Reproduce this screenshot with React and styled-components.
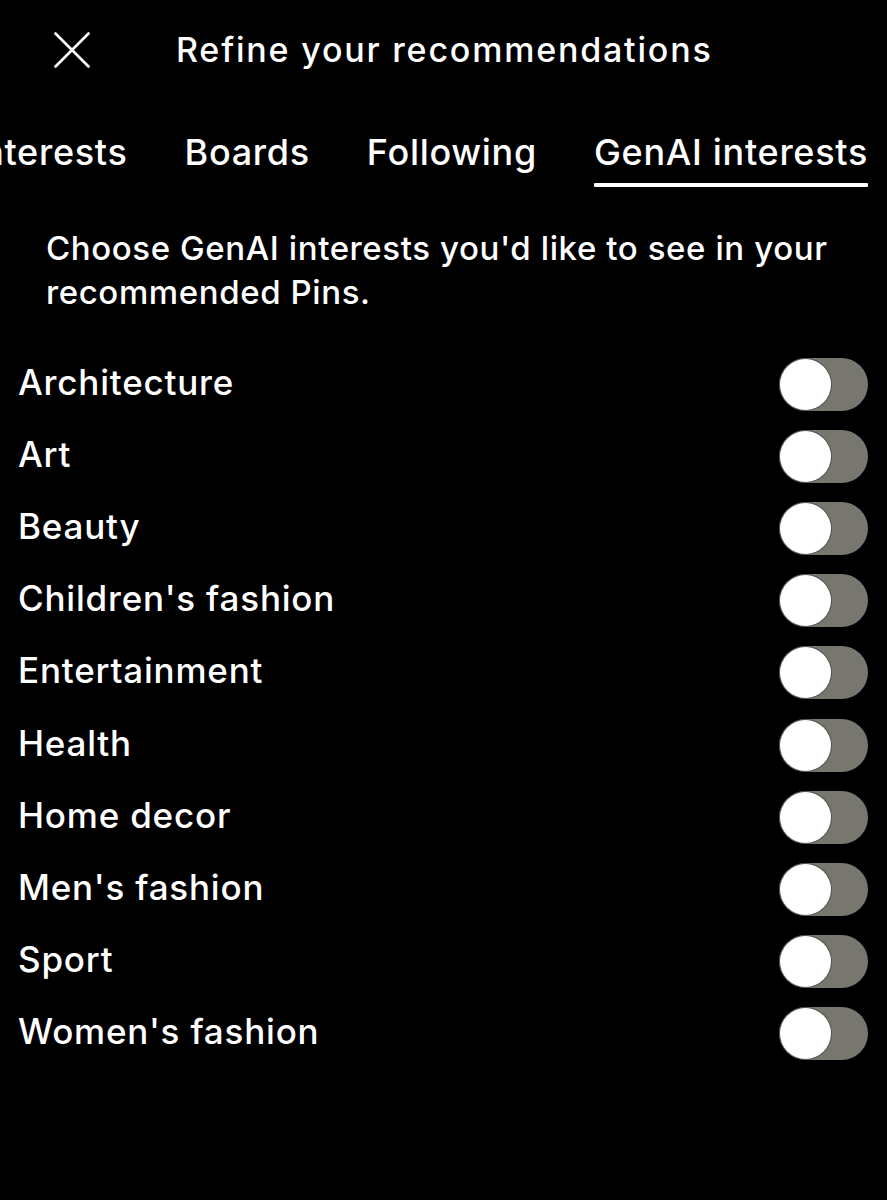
import styled, {createGlobalStyle} from "styled-components";

const GlobalStyle = createGlobalStyle`
  html, body {
    margin: 0;
    padding: 0;
    background: #000;
  }
  body {
    font-family: Inter, "Noto Sans", "Liberation Sans", sans-serif;
    font-weight: 500;
    color: #fff;
    -webkit-font-smoothing: antialiased;
  }
`

const Page = styled.div`
  width: 887px;
  min-height: 1200px;
  background: #000;
  overflow: hidden;
`

const Header = styled.div`
  height: 100px;
  display: flex;
  align-items: center;
  padding-left: 54px;
  gap: 86px;
`

const CloseButton = styled.button`
  width: 36px;
  height: 36px;
  padding: 0;
  border: none;
  background: none;
  color: #fff;
  display: flex;
  align-items: center;
  justify-content: center;
`

const Title = styled.div`
  font-size: 34px;
  line-height: 44px;
  letter-spacing: 1.8px;
`

const TabBar = styled.div`
  display: flex;
  justify-content: flex-end;
  gap: 57px;
  padding-right: 19px;
  overflow: hidden;
`

const Tab = styled.div`
  flex-shrink: 0;
  padding-top: 30px;
  display: flex;
  flex-direction: column;
  font-size: 36px;
  line-height: 44px;
  letter-spacing: 0.7px;
  white-space: nowrap;

  &:after {
    content: "";
    display: block;
    height: 4px;
    margin-top: 9px;
    border-radius: 1px;
    background: ${p => (p.$active ? "#fff" : "transparent")};
  }
`

const Description = styled.p`
  margin: 39px 0 0;
  padding: 0 40px 0 46px;
  font-size: 33px;
  line-height: 44px;
  letter-spacing: 0.6px;
`

const List = styled.div`
  margin-top: 34px;
  padding: 0 19px 0 18px;
  display: flex;
  flex-direction: column;
`

const Row = styled.div`
  height: 72.2px;
  display: flex;
  align-items: center;
  justify-content: space-between;
`

const Label = styled.span`
  font-size: 35px;
  letter-spacing: 0.8px;
  margin-top: -5px;
`

const Track = styled.div`
  width: 89px;
  height: 53px;
  border-radius: 27px;
  background: #77776f;
  display: flex;
  align-items: center;
  padding: 1px;
  box-sizing: border-box;
`

const Knob = styled.div`
  width: 51px;
  height: 51px;
  border-radius: 50%;
  background: #fff;
  box-shadow: 0 0 0 1px rgba(60, 60, 55, 0.6);
`

const topics = [
  "Architecture",
  "Art",
  "Beauty",
  "Children's fashion",
  "Entertainment",
  "Health",
  "Home decor",
  "Men's fashion",
  "Sport",
  "Women's fashion",
]

function CloseIcon() {
  return (
    <svg width="36" height="36" viewBox="0 0 36 36" fill="none">
      <path d="M1.5 1.5 L34.5 34.5 M34.5 1.5 L1.5 34.5" stroke="#fff" strokeWidth="2.6" strokeLinecap="round"/>
    </svg>
  )
}

export default function App() {
  return (
    <Page>
      <GlobalStyle/>
      <Header>
        <CloseButton aria-label="Close">
          <CloseIcon/>
        </CloseButton>
        <Title>Refine your recommendations</Title>
      </Header>
      <TabBar>
        <Tab>Interests</Tab>
        <Tab>Boards</Tab>
        <Tab>Following</Tab>
        <Tab $active>GenAI interests</Tab>
      </TabBar>
      <Description>
        Choose GenAI interests you'd like to see in your recommended Pins.
      </Description>
      <List>
        {topics.map(t => (
          <Row key={t}>
            <Label>{t}</Label>
            <Track>
              <Knob/>
            </Track>
          </Row>
        ))}
      </List>
    </Page>
  )
}
